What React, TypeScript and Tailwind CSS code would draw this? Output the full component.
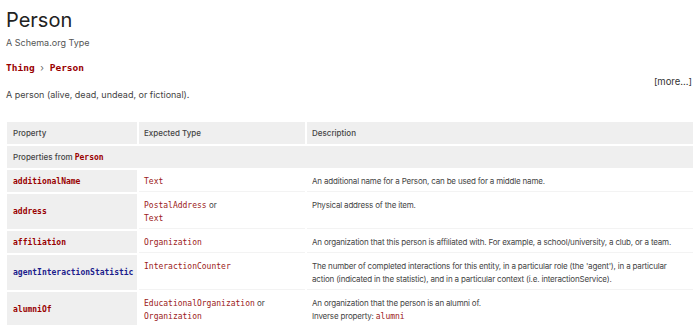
const mono = "font-['DejaVu_Sans_Mono',monospace]"

type Row = {
  name: string
  blue?: boolean
  types: string[]
  desc: React.ReactNode
}

const rows: Row[] = [
  {
    name: "additionalName",
    types: ["Text"],
    desc: "An additional name for a Person, can be used for a middle name.",
  },
  {
    name: "address",
    types: ["PostalAddress", "Text"],
    desc: "Physical address of the item.",
  },
  {
    name: "affiliation",
    types: ["Organization"],
    desc: "An organization that this person is affiliated with. For example, a school/university, a club, or a team.",
  },
  {
    name: "agentInteractionStatistic",
    blue: true,
    types: ["InteractionCounter"],
    desc: "The number of completed interactions for this entity, in a particular role (the 'agent'), in a particular action (indicated in the statistic), and in a particular context (i.e. interactionService).",
  },
  {
    name: "alumniOf",
    types: ["EducationalOrganization", "Organization"],
    desc: (
      <>
        An organization that the person is an alumni of.
        <br />
        Inverse property: <span className={`${mono} tracking-normal text-[#9b2020]`}>alumni</span>
      </>
    ),
  },
]

export default function App() {
  return (
    <div className="min-h-screen bg-white font-['Inter',sans-serif] text-[#333] overflow-hidden">
      <div className="pl-[6px] pt-[8px]">
        <h1 className="text-[20px] leading-[24px] font-normal text-[#222]">Person</h1>
        <p className="mt-[4px] text-[9px] leading-[13px] text-[#555]">A Schema.org Type</p>
        <p className={`${mono} mt-[12px] text-[9.5px] leading-[13px] font-bold text-[#990000]`}>
          Thing <span className="font-normal text-[#666] font-['Inter',sans-serif]">›</span> Person
        </p>
        <div className="flex justify-end pr-[8px] mt-[1px]">
          <a href="#" className="text-[9.5px] leading-[13px] text-[#333]">[more...]</a>
        </div>
        <p className="text-[9px] leading-[13px] text-[#444]">
          A person (alive, dead, undead, or fictional).
        </p>
      </div>

      <table className="mt-[19px] ml-[5px] w-[690px] border-separate border-spacing-[2px] text-[8px] leading-[13px] text-[#444] table-fixed">
        <thead>
          <tr>
            <th className="w-[130px] bg-[#efefef] px-[6px] py-[4.5px] text-left font-medium">Property</th>
            <th className="w-[166px] bg-[#efefef] px-[5px] py-[4.5px] text-left font-medium">Expected Type</th>
            <th className="bg-[#efefef] px-[5px] py-[4.5px] text-left font-medium">Description</th>
          </tr>
        </thead>
        <tbody>
          <tr>
            <td colSpan={3} className="bg-[#efefef] px-[6px] py-[4.5px] font-medium">
              Properties from <span className={`${mono} font-bold text-[#990000]`}>Person</span>
            </td>
          </tr>
          {rows.map((r) => (
            <tr key={r.name}>
              <td className="bg-[#efefef] px-[6px] py-[4px] align-middle">
                <span className={`${mono} font-bold ${r.blue ? "text-[#1c1c8c]" : "text-[#990000]"}`}>{r.name}</span>
              </td>
              <td className="border-b border-[#f3f3f3] px-[5px] pt-[4.5px] pb-[3.5px] align-top">
                {r.types.map((t, i) => (
                  <div key={t}>
                    <span className={`${mono} text-[#9b2020]`}>{t}</span>
                    {i < r.types.length - 1 && <span> or</span>}
                  </div>
                ))}
              </td>
              <td className="border-b border-[#f3f3f3] px-[5px] pt-[4.5px] pb-[3.5px] align-top tracking-[-0.18px]">{r.desc}</td>
            </tr>
          ))}
        </tbody>
      </table>
    </div>
  )
}
